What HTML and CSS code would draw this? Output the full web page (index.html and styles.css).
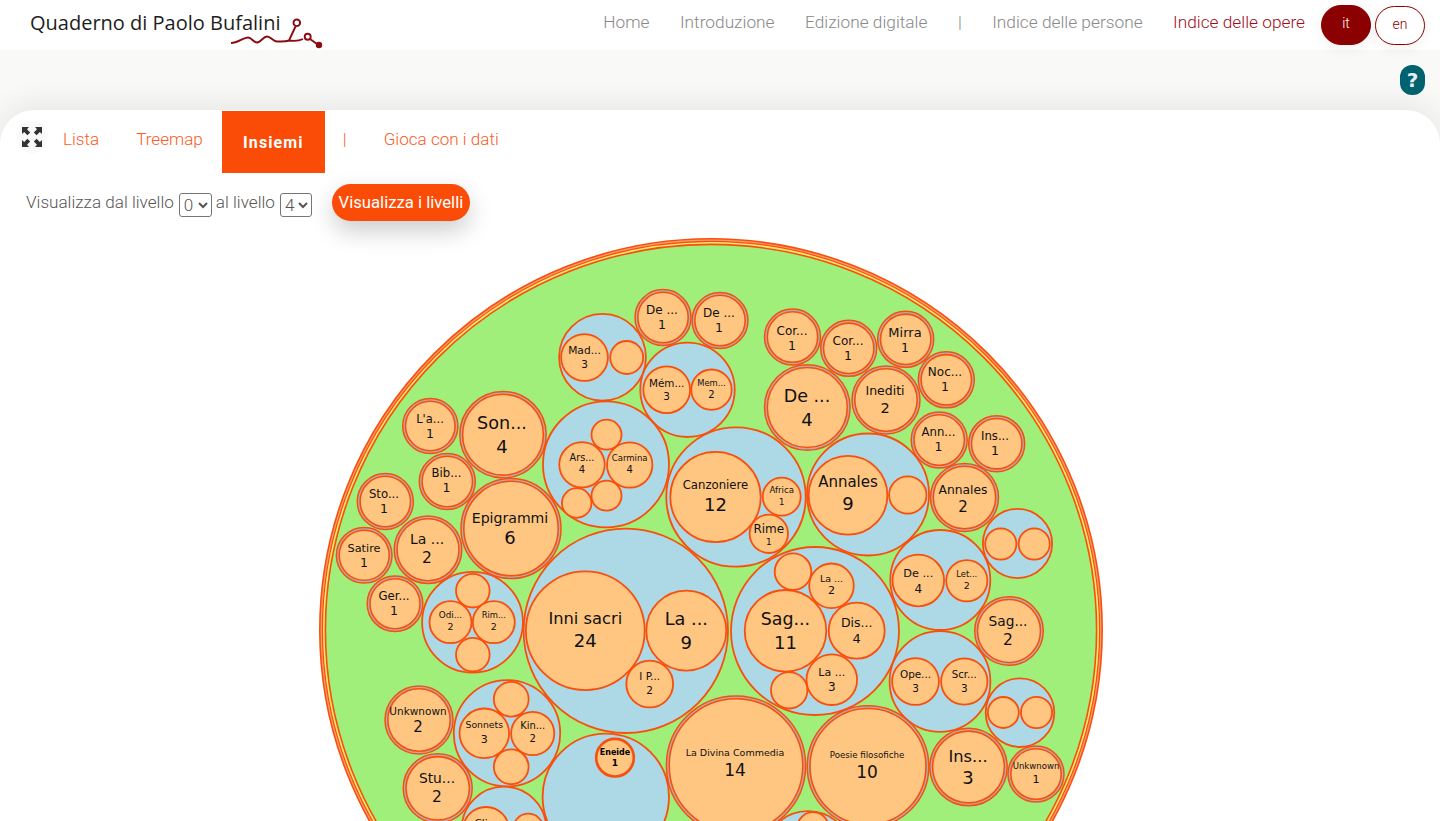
FILE: index.html
```html
<!DOCTYPE html>
<html lang="it">
<head>
<meta charset="utf-8">
<title>Quaderno di Paolo Bufalini</title>
<link rel="stylesheet" href="styles.css">
</head>
<body>
<header class="topbar">
  <a class="logo" href="#">
    <span class="logo-text">Quaderno di Paolo Bufalini</span>
    <svg class="logo-mark" viewBox="225 15 100 36" width="100" height="36" aria-hidden="true">
      <path d="M231 43 C238 43 243 37.5 248 37.5 C252 37.5 253 42.5 257 42.5 C261 42.5 263 36.5 267 36.5 C271 36.5 273 41.5 277 41.5 C281 41.5 285 42 289 40.5 L295.5 26.5 M289 40.5 C293 41 299 41 303 39" fill="none"/>
      <circle cx="296.8" cy="22.8" r="3.3" fill="none"/>
      <circle cx="307.7" cy="36.7" r="3" fill="none"/>
      <path d="M310 39 L317 44" fill="none"/>
      <circle class="logo-dot" cx="319" cy="45" r="3.2"/>
    </svg>
  </a>
  <nav class="mainnav">
    <a href="#">Home</a>
    <a href="#">Introduzione</a>
    <a href="#">Edizione digitale</a>
    <span>|</span>
    <a href="#">Indice delle persone</a>
    <a class="current" href="#">Indice delle opere</a>
    <div class="langs">
      <a class="lang lang-on" href="#">it</a>
      <a class="lang" href="#">en</a>
    </div>
  </nav>
</header>

<div class="helpbar"><span class="help">?</span></div>

<main class="panel">
  <div class="tabs">
    <button class="expand" type="button" aria-label="Schermo intero">
      <svg viewBox="0 0 22 22" width="22" height="22" aria-hidden="true">
        <path d="M1 1 H8 L6 3.2 L9.2 6.4 L6.4 9.2 L3.2 6 L1 8 Z"/>
        <path d="M21 1 H14 L16 3.2 L12.8 6.4 L15.6 9.2 L18.8 6 L21 8 Z"/>
        <path d="M1 21 H8 L6 18.8 L9.2 15.6 L6.4 12.8 L3.2 16 L1 14 Z"/>
        <path d="M21 21 H14 L16 18.8 L12.8 15.6 L15.6 12.8 L18.8 16 L21 14 Z"/>
      </svg>
    </button>
    <a class="tab tab-lista" href="#">Lista</a>
    <a class="tab tab-tree" href="#">Treemap</a>
    <a class="tab tab-on" href="#">Insiemi</a>
    <span class="tab tab-sep">|</span>
    <a class="tab" href="#">Gioca con i dati</a>
  </div>

  <form class="levels">
    <label for="lv-from">Visualizza dal livello</label>
    <select id="lv-from"><option>0</option><option>1</option><option>2</option><option>3</option><option>4</option></select>
    <label for="lv-to">al livello</label>
    <select id="lv-to"><option>4</option><option>3</option><option>2</option><option>1</option><option>0</option></select>
    <button class="go" type="button">Visualizza i livelli</button>
  </form>

  <svg class="pack" viewBox="0 232 1440 589" width="1440" height="589" role="img" aria-label="Insiemi">
    <!-- root -->
    <circle class="r1" cx="711" cy="630" r="391.2"/>
    <circle class="r2" cx="711" cy="630" r="388.6"/>
    <circle class="r3" cx="711" cy="630" r="385.6"/>

    <!-- blue groups -->
    <circle class="b" cx="602.5" cy="357.3" r="43.4"/>
    <circle class="p" cx="584.5" cy="357.5" r="23.4"/>
    <circle class="p" cx="626.7" cy="357.5" r="16.5"/>
    <text x="584.5" y="354" font-size="10.7">Mad...</text><text x="584.5" y="367.7" font-size="10.5">3</text>

    <circle class="b" cx="687.5" cy="389.8" r="47.2"/>
    <circle class="p" cx="666.7" cy="389.7" r="23.4"/>
    <circle class="p" cx="711.5" cy="389.7" r="20.2"/>
    <text x="666.7" y="386.7" font-size="10.4">Mém...</text><text x="666.7" y="400" font-size="10.5">3</text>
    <text x="711.5" y="386" font-size="8.4">Mem...</text><text x="711.5" y="397.7" font-size="10">2</text>

    <circle class="b" cx="606" cy="464.3" r="63"/>
    <circle class="p" cx="606.5" cy="434.7" r="15"/>
    <circle class="p" cx="582" cy="464.8" r="22.7"/>
    <circle class="p" cx="629.7" cy="465" r="22.7"/>
    <circle class="p" cx="576.7" cy="503" r="14.8"/>
    <circle class="p" cx="606.5" cy="495.7" r="15"/>
    <text x="582" y="460.7" font-size="9.7">Ars...</text><text x="582" y="473.3" font-size="10">4</text>
    <text x="629.7" y="460.7" font-size="8.5">Carmina</text><text x="629.7" y="473.3" font-size="10">4</text>

    <circle class="b" cx="736" cy="497" r="69.7"/>
    <circle class="p" cx="715.5" cy="497" r="45.2"/>
    <circle class="p" cx="781.7" cy="496.7" r="19"/>
    <circle class="p" cx="768.8" cy="533.8" r="19.2"/>
    <text x="715.5" y="489" font-size="11.7">Canzoniere</text><text x="715.5" y="511" font-size="18">12</text>
    <text x="781.7" y="493.3" font-size="8.6">Africa</text><text x="781.7" y="505" font-size="8.5">1</text>
    <text x="768.8" y="532.7" font-size="12">Rime</text><text x="768.8" y="545" font-size="9">1</text>

    <circle class="b" cx="868" cy="494.5" r="61"/>
    <circle class="p" cx="848" cy="495.3" r="39.4"/>
    <circle class="p" cx="907.8" cy="495" r="18.7"/>
    <text x="848" y="487.3" font-size="15">Annales</text><text x="848" y="510" font-size="18">9</text>

    <circle class="b" cx="625.8" cy="630.8" r="102.2"/>
    <circle class="p" cx="585.3" cy="630.7" r="59.4"/>
    <circle class="p" cx="686.3" cy="630.7" r="40"/>
    <circle class="p" cx="649.7" cy="684" r="23.4"/>
    <text x="585.3" y="624.3" font-size="16.3">Inni sacri</text><text x="585.3" y="647" font-size="18">24</text>
    <text x="686.3" y="625" font-size="17.7">La ...</text><text x="686.3" y="649.3" font-size="18">9</text>
    <text x="649.7" y="680" font-size="10.3">I P...</text><text x="649.7" y="693.7" font-size="10.5">2</text>

    <circle class="b" cx="472.5" cy="622.2" r="50.4"/>
    <circle class="p" cx="472.8" cy="590.7" r="16.8"/>
    <circle class="p" cx="450.5" cy="622.2" r="21"/>
    <circle class="p" cx="493.8" cy="622.2" r="21"/>
    <circle class="p" cx="472.8" cy="654.7" r="16.8"/>
    <text x="450.5" y="617.7" font-size="8.8">Odi...</text><text x="450.5" y="629.7" font-size="9.5">2</text>
    <text x="493.8" y="617.7" font-size="8.4">Rim...</text><text x="493.8" y="629.7" font-size="9.5">2</text>

    <circle class="b" cx="507" cy="733.3" r="53.2"/>
    <circle class="p" cx="511.2" cy="699.2" r="17.4"/>
    <circle class="p" cx="484.3" cy="733.3" r="24.8"/>
    <circle class="p" cx="532.7" cy="733.5" r="21.6"/>
    <circle class="p" cx="511.2" cy="766.8" r="17.4"/>
    <text x="484.3" y="727.7" font-size="9.3">Sonnets</text><text x="484.3" y="742.7" font-size="11">3</text>
    <text x="532.7" y="728.7" font-size="9.9">Kin...</text><text x="532.7" y="742" font-size="10">2</text>

    <circle class="b" cx="605.8" cy="796.8" r="63.2"/>
    <circle class="p p-bold" cx="615" cy="757.7" r="18.8"/>
    <text class="bold" x="615" y="755" font-size="8">Eneide</text><text class="bold" x="615" y="766" font-size="9">1</text>

    <circle class="b" cx="504" cy="829" r="42.3"/>
    <circle class="p" cx="486" cy="830" r="23"/>
    <circle class="p" cx="528.3" cy="828.7" r="15"/>
    <text x="486" y="826.6" font-size="10.5">Cli...</text>

    <circle class="b" cx="940.3" cy="580" r="50"/>
    <circle class="p" cx="918.3" cy="580.5" r="25.8"/>
    <circle class="p" cx="966.8" cy="580.7" r="20.6"/>
    <text x="918.3" y="576.7" font-size="11.3">De ...</text><text x="918.3" y="592.7" font-size="12">4</text>
    <text x="966.8" y="576.7" font-size="8.4">Let...</text><text x="966.8" y="589.3" font-size="9.5">2</text>

    <circle class="b" cx="1017.5" cy="543.5" r="34.6"/>
    <circle class="p" cx="1000.8" cy="544" r="15.6"/>
    <circle class="p" cx="1034.2" cy="544" r="15.6"/>

    <circle class="b" cx="815" cy="631" r="84"/>
    <circle class="p" cx="793" cy="571.7" r="18.3"/>
    <circle class="p" cx="831.5" cy="585.8" r="22.3"/>
    <circle class="p" cx="785.5" cy="630.8" r="40.8"/>
    <circle class="p" cx="856.7" cy="630.7" r="28"/>
    <circle class="p" cx="831.8" cy="679.7" r="25.3"/>
    <circle class="p" cx="789.2" cy="690.3" r="18.2"/>
    <text x="831.5" y="582" font-size="9.5">La ...</text><text x="831.5" y="594.3" font-size="11">2</text>
    <text x="785.5" y="625" font-size="17.4">Sag...</text><text x="785.5" y="649.3" font-size="18">11</text>
    <text x="856.7" y="627" font-size="12.5">Dis...</text><text x="856.7" y="642.7" font-size="13">4</text>
    <text x="831.8" y="676" font-size="11">La ...</text><text x="831.8" y="691" font-size="12">3</text>

    <circle class="b" cx="940" cy="681.5" r="50.4"/>
    <circle class="p" cx="915.5" cy="681.5" r="23.4"/>
    <circle class="p" cx="964.3" cy="681.5" r="23.2"/>
    <text x="915.5" y="677.7" font-size="10.4">Ope...</text><text x="915.5" y="691.7" font-size="10.5">3</text>
    <text x="964.3" y="677.7" font-size="10.2">Scr...</text><text x="964.3" y="691.7" font-size="10.5">3</text>

    <circle class="b" cx="1020" cy="712.7" r="34.3"/>
    <circle class="p" cx="1003.3" cy="712.5" r="15.5"/>
    <circle class="p" cx="1036.5" cy="712.5" r="15.6"/>

    <circle class="b" cx="808" cy="856" r="44.8"/>
    <circle class="p" cx="813" cy="828" r="15.8"/>

    <!-- double rings -->
    <circle class="o" cx="663" cy="317.5" r="28"/><circle class="i" cx="663" cy="317.5" r="25.2"/>
    <text x="662" y="314" font-size="12">De ...</text><text x="662" y="329" font-size="12.5">1</text>
    <circle class="o" cx="720" cy="320.5" r="28"/><circle class="i" cx="720" cy="320.5" r="25.2"/>
    <text x="719" y="317" font-size="12">De ...</text><text x="719" y="332" font-size="12.5">1</text>
    <circle class="o" cx="792.5" cy="337" r="28"/><circle class="i" cx="792.5" cy="337" r="25.2"/>
    <text x="792" y="334.6" font-size="12">Cor...</text><text x="792" y="349.5" font-size="12.5">1</text>
    <circle class="o" cx="848.7" cy="348.3" r="28"/><circle class="i" cx="848.7" cy="348.3" r="25.2"/>
    <text x="848" y="345" font-size="12">Cor...</text><text x="848" y="360" font-size="12.5">1</text>
    <circle class="o" cx="905.7" cy="339.3" r="28"/><circle class="i" cx="905.7" cy="339.3" r="25.2"/>
    <text x="905" y="337" font-size="13">Mirra</text><text x="905" y="352" font-size="12.5">1</text>
    <circle class="o" cx="946.3" cy="379.8" r="28"/><circle class="i" cx="946.3" cy="379.8" r="25.2"/>
    <text x="945" y="376" font-size="12">Noc...</text><text x="945" y="391" font-size="12.5">1</text>
    <circle class="o" cx="807.3" cy="407.5" r="42.8"/><circle class="i" cx="807.3" cy="407.5" r="40"/>
    <text x="807" y="401.7" font-size="17.5">De ...</text><text x="807" y="426" font-size="18">4</text>
    <circle class="o" cx="886" cy="400" r="34"/><circle class="i" cx="886" cy="400" r="31.2"/>
    <text x="885" y="395" font-size="12.5">Inediti</text><text x="885" y="412.7" font-size="14.5">2</text>
    <circle class="o" cx="939.2" cy="440" r="28"/><circle class="i" cx="939.2" cy="440" r="25.2"/>
    <text x="938.5" y="435.7" font-size="11.7">Ann...</text><text x="938.5" y="451" font-size="12.5">1</text>
    <circle class="o" cx="996.7" cy="443.7" r="28"/><circle class="i" cx="996.7" cy="443.7" r="25.2"/>
    <text x="995" y="440" font-size="11.7">Ins...</text><text x="995" y="455" font-size="12.5">1</text>
    <circle class="o" cx="964.5" cy="497.5" r="34"/><circle class="i" cx="964.5" cy="497.5" r="31.2"/>
    <text x="963" y="494" font-size="12.3">Annales</text><text x="963" y="512" font-size="15">2</text>
    <circle class="o" cx="430.3" cy="426" r="27.6"/><circle class="i" cx="430.3" cy="426" r="24.8"/>
    <text x="430" y="423" font-size="11.5">L'a...</text><text x="430" y="438" font-size="12.5">1</text>
    <circle class="o" cx="503" cy="434.7" r="43.2"/><circle class="i" cx="503" cy="434.7" r="40.4"/>
    <text x="502" y="429" font-size="17.6">Son...</text><text x="502" y="452.7" font-size="18">4</text>
    <circle class="o" cx="447.3" cy="481.5" r="28"/><circle class="i" cx="447.3" cy="481.5" r="25.2"/>
    <text x="446.5" y="477" font-size="11.7">Bib...</text><text x="446.5" y="492" font-size="12.5">1</text>
    <circle class="o" cx="385.3" cy="501.5" r="28"/><circle class="i" cx="385.3" cy="501.5" r="25.2"/>
    <text x="384" y="498" font-size="11.7">Sto...</text><text x="384" y="513" font-size="12.5">1</text>
    <circle class="o" cx="511" cy="528.5" r="50"/><circle class="i" cx="511" cy="528.5" r="47.2"/>
    <text x="510" y="522.7" font-size="14.1">Epigrammi</text><text x="510" y="544.3" font-size="18">6</text>
    <circle class="o" cx="428" cy="549.7" r="33.8"/><circle class="i" cx="428" cy="549.7" r="31"/>
    <text x="427" y="544.3" font-size="14">La ...</text><text x="427" y="562.7" font-size="15.5">2</text>
    <circle class="o" cx="364.2" cy="555.3" r="27.8"/><circle class="i" cx="364.2" cy="555.3" r="25"/>
    <text x="364" y="551.7" font-size="11.3">Satire</text><text x="364" y="566.7" font-size="12.5">1</text>
    <circle class="o" cx="395" cy="603.7" r="27.8"/><circle class="i" cx="395" cy="603.7" r="25"/>
    <text x="394" y="600.3" font-size="11.7">Ger...</text><text x="394" y="615" font-size="12.5">1</text>
    <circle class="o" cx="419" cy="720" r="34"/><circle class="i" cx="419" cy="720" r="31.2"/>
    <text x="418" y="715" font-size="10.5">Unkwnown</text><text x="418" y="731.7" font-size="15">2</text>
    <circle class="o" cx="437.7" cy="788.3" r="34.5"/><circle class="i" cx="437.7" cy="788.3" r="31.7"/>
    <text x="437" y="782.7" font-size="13.8">Stu...</text><text x="437" y="802" font-size="15.5">2</text>
    <circle class="o" cx="1009" cy="631" r="34.3"/><circle class="i" cx="1009" cy="631" r="31.5"/>
    <text x="1008" y="626" font-size="13.75">Sag...</text><text x="1008" y="645" font-size="15.5">2</text>
    <circle class="o" cx="968.5" cy="767" r="38.7"/><circle class="i" cx="968.5" cy="767" r="35.9"/>
    <text x="968" y="762" font-size="16.3">Ins...</text><text x="968" y="784.3" font-size="18">3</text>
    <circle class="o" cx="1036" cy="774" r="28"/><circle class="i" cx="1036" cy="774" r="25.2"/>
    <text x="1036" y="769.3" font-size="8.55">Unkwnown</text><text x="1036" y="782.7" font-size="11">1</text>
    <circle class="o" cx="868" cy="766.5" r="60.8"/><circle class="i" cx="868" cy="766.5" r="58"/>
    <text x="867" y="757.7" font-size="8.66">Poesie filosofiche</text><text x="867" y="778" font-size="17">10</text>
    <circle class="o" cx="736" cy="765.5" r="69.6"/><circle class="i" cx="736" cy="765.5" r="66.8"/>
    <text x="735" y="756" font-size="9.5">La Divina Commedia</text><text x="735" y="776" font-size="17">14</text>
  </svg>
</main>
</body>
</html>
```

FILE: styles.css
```css
* { box-sizing: border-box; }
html, body { margin: 0; height: 821px; overflow: hidden; }
body {
  background: #f9f9f8;
  font-family: Roboto, "Liberation Sans", sans-serif;
  font-weight: 300;
  font-size: 17.1px;
  color: #555;
}
a { text-decoration: none; color: inherit; }

.topbar {
  height: 50px;
  background: #fff;
  display: flex;
  justify-content: space-between;
  padding: 0 15px 0 30px;
  position: relative;
  z-index: 2;
}
.logo { position: relative; display: block; padding-top: 9px; }
.logo-text {
  font-family: "Open Sans", "Liberation Sans", sans-serif;
  font-weight: 400;
  font-size: 20px;
  line-height: 28px;
  color: #1d1d1d;
  white-space: nowrap;
}
.logo-mark {
  position: absolute;
  left: 195px;
  top: 15px;
  stroke: #8b0b12;
  stroke-width: 1.9;
}
.logo-dot { fill: #8b0b12; stroke: none; }

.mainnav {
  display: flex;
  align-items: flex-start;
  gap: 30.5px;
  color: #888;
  font-size: 17.3px;
  line-height: 45px;
  white-space: nowrap;
}
.mainnav .current { color: #a00d1a; }
.langs { display: flex; gap: 4px; margin-left: -14.5px; padding-top: 5px; }
.lang {
  width: 50px;
  height: 39px;
  margin-top: 1px;
  border: 1px solid #8b0000;
  border-radius: 20px;
  background: #fff;
  color: #8b0000;
  text-align: center;
  line-height: 34px;
  font-size: 14px;
  box-shadow: 0 4px 14px rgba(0, 0, 0, .06);
}
.lang-on {
  height: 40px;
  margin-top: 0;
  background: #8b0000;
  color: #fff;
}

.helpbar {
  height: 60px;
  display: flex;
  justify-content: flex-end;
  padding: 15px 15px 0 0;
}
.help {
  width: 25px;
  height: 30px;
  border-radius: 12px;
  background: #00616f;
  color: #e6eef0;
  font-family: "DejaVu Sans", sans-serif;
  font-weight: 700;
  font-size: 20px;
  line-height: 30px;
  text-align: center;
}

.panel {
  height: 711px;
  background: #fff;
  border-radius: 34px 34px 0 0;
  box-shadow: 0 -6px 30px rgba(0, 0, 0, .08);
  padding-top: 1px;
  overflow: hidden;
}
.tabs {
  height: 62px;
  display: flex;
  align-items: stretch;
  padding-left: 16px;
}
.expand {
  width: 32px;
  height: 32px;
  margin-top: 10px;
  padding: 5px;
  border: 0;
  border-radius: 50%;
  background: #fafafa;
  display: block;
}
.expand svg { display: block; fill: #333; }
.tab {
  display: flex;
  align-items: center;
  color: #fb5a25;
  padding: 0 0 7px;
  white-space: nowrap;
}
.tab-lista { margin-left: 15px; }
.tab-tree { margin-left: 37px; }
.tab-on {
  margin: 0 18px 0 19px;
  width: 103px;
  justify-content: center;
  padding: 0;
  background: #fa4c07;
  color: #fff;
  font-size: 16px;
  font-weight: 700;
  letter-spacing: 1.1px;
}
.tab-sep { margin-right: 37px; }

.levels {
  height: 59px;
  display: flex;
  align-items: flex-start;
  padding: 11px 0 0 26px;
  gap: 4px;
}
.levels label { line-height: 37px; }
.levels select {
  margin: 9px 0 0 1px;
  width: 33px;
  height: 24px;
  font: inherit;
  color: #555;
  background: #fff;
  border: 1px solid #767676;
  border-radius: 3px;
  padding: 0;
}
.levels #lv-to { width: 32px; margin-right: 16px; }
.go {
  height: 37px;
  width: 138px;
  border: 0;
  border-radius: 19px;
  padding: 0;
  background: #fa4c07;
  color: #fff;
  font: 400 16.7px Roboto, sans-serif;
  box-shadow: 0 10px 24px rgba(0, 0, 0, .2);
}

.pack { display: block; overflow: hidden; }
.pack text {
  font-family: "DejaVu Sans", sans-serif;
  font-weight: 400;
  text-anchor: middle;
  fill: #111;
}
.pack text.bold { font-weight: 700; fill: #000; }
.pack circle { stroke: #fa4f0c; stroke-width: 1.8; }
.pack .r1 { fill: #f9a070; stroke-width: 1.6; }
.pack .r2 { fill: #fde96f; stroke-width: 1.2; }
.pack .r3 { fill: #9fef7a; stroke-width: 1.6; }
.pack .b { fill: #add8e6; }
.pack .p { fill: #fec681; }
.pack .p-bold { stroke-width: 2.6; }
.pack .o { fill: #b0afb5; stroke-width: 1.5; }
.pack .i { fill: #fec681; stroke-width: 1.6; }
```
